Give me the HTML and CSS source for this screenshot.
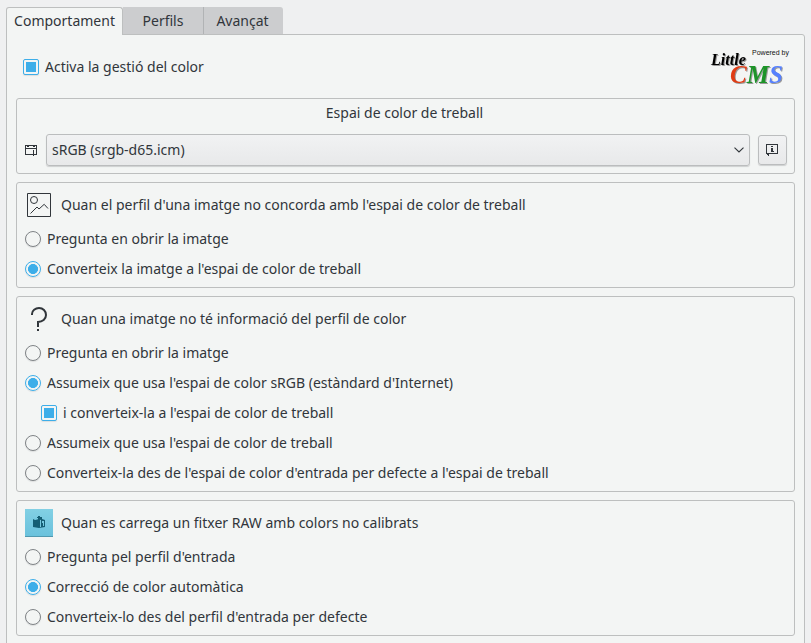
FILE: index.html
```html
<!DOCTYPE html>
<html lang="ca">
<head>
<meta charset="utf-8">
<title>Gestió del color</title>
<link rel="stylesheet" href="styles.css">
</head>
<body>
<div class="tabs">
  <div class="tab active">Comportament</div>
  <div class="tab perfils">Perfils</div>
  <div class="tab last">Avançat</div>
</div>
<main class="pane">
  <div class="top">
    <div class="option"><span class="check"></span>Activa la gestió del color</div>
    <svg class="logo" width="84" height="40" viewBox="0 0 84 40">
      <g class="logo-text">
        <text x="3" y="18" textLength="35" lengthAdjust="spacingAndGlyphs" font-size="17">Little</text>
        <text x="22" y="36" textLength="53" lengthAdjust="spacingAndGlyphs" font-size="25"><tspan fill="#e03c14">C</tspan><tspan fill="#1c9428">M</tspan><tspan fill="#5580ff">S</tspan></text>
      </g>
      <text class="powered" x="44" y="8" textLength="37" lengthAdjust="spacingAndGlyphs">Powered by</text>
    </svg>
  </div>

  <section class="group workspace">
    <div class="title">Espai de color de treball</div>
    <div class="picker">
      <svg class="profile-icon" width="12" height="12" viewBox="0 0 12 12" fill="none" stroke="#31363b" shape-rendering="crispEdges"><path d="M.5 .5H11.5V9.5H.5ZM0 3.5H12M8.5 5V11M2 1.5H4M8 1.5H10"/></svg>
      <div class="combo"><span>sRGB (srgb-d65.icm)</span>
        <svg width="10" height="6" viewBox="0 0 10 6" fill="none" stroke="#31363b" stroke-width="1.1"><path d="M.5 .6L5 5L9.5 .6"/></svg>
      </div>
      <div class="info">
        <svg width="12" height="12" viewBox="0 0 12 12" fill="#31363b" shape-rendering="crispEdges"><path d="M0 0H12V10H3V12H2V11H1V10H0ZM1 1V9H11V1Z" fill-rule="evenodd"/><path d="M5 2H7V3H5ZM5 4H7V7H8V8H5Z"/></svg>
      </div>
    </div>
  </section>

  <section class="group">
    <div class="head">
      <svg width="28" height="28" viewBox="0 0 28 28" fill="none" stroke="#31363b"><path d="M2.5 2.5H25.500V25.500H2.500Z"/><circle cx="9" cy="9" r="3.500"/><path d="M5.500 22.500L12 16L14 18L19.200 13.300L23 17.500"/></svg>
      Quan el perfil d'una imatge no concorda amb l'espai de color de treball
    </div>
    <div class="option"><span class="radio"></span>Pregunta en obrir la imatge</div>
    <div class="option"><span class="radio on"></span>Converteix la imatge a l'espai de color de treball</div>
  </section>

  <section class="group">
    <div class="head">
      <svg width="28" height="28" viewBox="0 0 28 28" fill="none" stroke="#31363b" stroke-width="2"><path d="M7 10V9C7 5.700 10.300 3 14 3C18 3 21 6 21 10C21 14.200 17.500 17 13 17V22M12 25H14"/></svg>
      Quan una imatge no té informació del perfil de color
    </div>
    <div class="option"><span class="radio"></span>Pregunta en obrir la imatge</div>
    <div class="option"><span class="radio on"></span>Assumeix que usa l'espai de color sRGB (estàndard d'Internet)</div>
    <div class="option nested"><span class="check"></span>i converteix-la a l'espai de color de treball</div>
    <div class="option"><span class="radio"></span>Assumeix que usa l'espai de color de treball</div>
    <div class="option wide"><span class="radio"></span>Converteix-la des de l'espai de color d'entrada per defecte a l'espai de treball</div>
  </section>

  <section class="group">
    <div class="head">
      <svg class="raw" width="28" height="28" viewBox="0 0 28 28"><path fill="#155e74" d="M8 10L10 11L13 10.200V9H12V8H13V7H15V8H17V10L20 11V18L14 19L8 18Z"/><path fill="#74c9df" d="M9 9H12V10L10 10.600ZM15 11L16 10.700V18H15ZM17 12H19V17H18V14H17Z"/></svg>
      Quan es carrega un fitxer RAW amb colors no calibrats
    </div>
    <div class="option"><span class="radio"></span>Pregunta pel perfil d'entrada</div>
    <div class="option"><span class="radio on"></span>Correcció de color automàtica</div>
    <div class="option"><span class="radio"></span>Converteix-lo des del perfil d'entrada per defecte</div>
  </section>
</main>
</body>
</html>
```
FILE: styles.css
```css
* { box-sizing: border-box; }
html { overflow: hidden; }
body {
  margin: 0;
  height: 643px;
  padding: 7px 6px 0;
  overflow: hidden;
  background: #eff0f1;
  color: #31363b;
  font: 14px/20px "Noto Sans", sans-serif;
  white-space: nowrap;
}
svg { display: block; flex: none; }

.tabs { display: flex; height: 28px; margin-bottom: -1px; position: relative; }
.tab {
  height: 27px;
  line-height: 27px;
  text-align: center;
  background: #cccdcf;
  width: 79px;
}
.tab.active {
  width: 117px;
  height: 28px;
  background: #f3f5f4;
  border: 1px solid #bdbfbf;
  border-bottom: 0;
  border-radius: 3px 3px 0 0;
  line-height: 26px;
}
.tab.perfils { width: 81px; border-right: 1px solid #b1b3b5; }
.tab.last { padding-right: 2px; border-radius: 0 3px 0 0; }

.pane {
  width: 799px;
  height: 620px;
  padding: 9px;
  background: #f3f5f4;
  border: 1px solid #bdbfbf;
  border-radius: 0 3px 0 0;
}
.top { display: flex; justify-content: space-between; height: 54px; padding: 0 3px 0 7px; }
.top .option { margin-top: 8px; }
.logo { margin-top: 3px; overflow: visible; }
.logo text { font-family: "Liberation Serif", serif; font-style: italic; font-weight: bold; }
.logo-text { fill: #000; filter: drop-shadow(1px 1px .5px #999); }
.logo .powered { font: 7px "Liberation Sans", sans-serif; fill: #111; }

.group {
  width: 779px;
  margin-bottom: 8px;
  padding: 8px 8px 3px;
  border: 1px solid #bdbfbf;
  border-radius: 3px;
}
.workspace { height: 76px; padding: 4px 7px 0 8px; }
.title { padding-right: 3px; text-align: center; }
.picker { display: flex; align-items: center; height: 32px; margin-top: 11px; }
.profile-icon { margin-top: 2px; }
.combo, .info {
  border: 1px solid #bbbdbe;
  border-radius: 3px;
  background: linear-gradient(#f1f2f3, #e8e9ea);
  box-shadow: 0 1px 1px #ced0d0;
}
.combo {
  display: flex;
  align-items: center;
  justify-content: space-between;
  width: 704px;
  height: 32px;
  margin: 0 8px 0 9px;
  padding: 0 5px;
}
.info { width: 29px; height: 30px; padding-right: 1px; display: grid; place-items: center; }

.head { display: flex; align-items: center; gap: 8px; height: 28px; margin-bottom: 5px; }
.raw { background: linear-gradient(#82d0e4, #69c1dc); box-shadow: inset 0 -1px #5098af; }
.option { display: flex; align-items: center; gap: 6px; height: 30px; }
.wide { letter-spacing: .01px; }
.nested { margin-left: 16px; }
.radio, .check {
  flex: none;
  width: 16px;
  height: 16px;
  border: 1px solid #7f8386;
  border-radius: 50%;
  background: #f3f5f4;
  box-shadow: 0 1px 1px #dcdede;
}
.radio.on {
  border-color: #3daee9;
  background: radial-gradient(circle, #3daee9 4.700px, transparent 5.300px);
}
.check {
  border-color: #3daee9;
  border-radius: 2px;
  padding: 2px;
  background: #3daee9 content-box;
}
```
